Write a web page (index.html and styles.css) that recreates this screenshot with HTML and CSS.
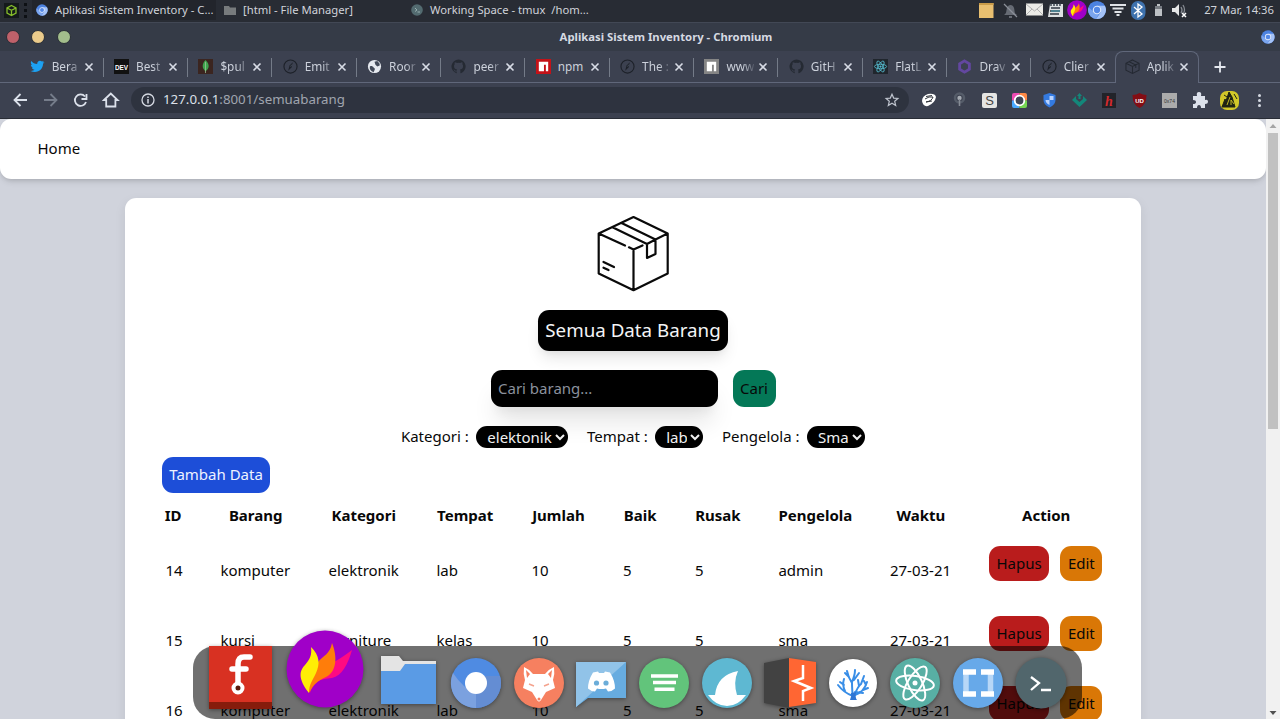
FILE: index.html
```html
<!DOCTYPE html>
<html lang="id">
<head>
<meta charset="utf-8">
<title>Aplikasi Sistem Inventory</title>
<link rel="stylesheet" href="styles.css">
</head>
<body>
<svg class="defs" aria-hidden="true">
  <defs>
    <symbol id="chromium" viewBox="0 0 20 20"><circle cx="10" cy="10" r="9.5" fill="#4c82e0"/><path d="M1 7a9.5 9.5 0 0 0 8 12.400L13 12 5.500 11z" fill="#7ba5ee"/><path d="M10 5.500h8.300A9.500 9.500 0 0 1 9 19.400l5-7z" fill="#a4c2f7"/><circle cx="10" cy="10" r="4.500" fill="#dfe9fb"/><circle cx="10" cy="10" r="3.300" fill="#5488e6"/></symbol>
    <symbol id="close" viewBox="0 0 10 10"><path d="M1.500 1.500l7 7M8.500 1.500l-7 7" stroke="#d8dce6" stroke-width="1.600" fill="none"/></symbol>
    <symbol id="compass" viewBox="0 0 16 16"><circle cx="8" cy="8" r="7" fill="none" stroke="#1d2129" stroke-width="1.200"/><path d="M10.500 3.500L9 9l-3.500 3.500L7 7z" fill="#1d2129"/><path d="M8 8l1.500-2" stroke="#596171" stroke-width=".7"/></symbol>
    <symbol id="github" viewBox="0 0 16 16"><path fill="#252a33" d="M8 .5a7.500 7.500 0 0 0-2.400 14.600c.4.100.5-.2.500-.4v-1.400c-2.100.5-2.600-.9-2.600-.9-.3-.9-.8-1.100-.8-1.100-.7-.5 0-.5 0-.5.800.1 1.200.8 1.200.8.700 1.200 1.800.8 2.200.6.100-.5.300-.8.500-1-1.700-.2-3.400-.8-3.400-3.700 0-.8.300-1.500.8-2-.1-.2-.3-1 .1-2 0 0 .6-.2 2.100.8a7 7 0 0 1 3.800 0c1.400-1 2-.8 2-.8.400 1 .2 1.800.1 2 .5.500.8 1.200.8 2 0 2.900-1.700 3.500-3.400 3.700.3.200.5.700.5 1.400v2.100c0 .2.100.5.500.4A7.500 7.500 0 0 0 8 .5z"/></symbol>
    <symbol id="npm" viewBox="0 0 16 16"><path fill="currentColor" d="M0 0h16v16H0z"/><path fill="#fff" d="M3 3h10v10h-2.500V6H8.500v7H3z"/></symbol>
    <symbol id="flame" viewBox="0 0 78 78"><circle cx="39" cy="39" r="38.500" fill="#a000c8"/><path d="M24 63c3-11 9-14 22-15 10-2 16-14 20-28-11 9-20 12-30 20-9 7-13 12-12 23z" fill="#ff0a82"/><path d="M23 63c5-9 8-12 17-16 10-5 12-19 6-34-2 11-8 12-15 20-8 9-10 18-8 30z" fill="#ff7d0a"/><path d="M23 63C11 48 14 40 19 35c5-6 7-10 6-18 9 9 9 17 5 26-3 7-7 11-7 20z" fill="#ffed05"/></symbol>
    <symbol id="box" viewBox="0 0 75 79"><g fill="none" stroke="currentColor" stroke-width="2.200" stroke-linejoin="round" stroke-linecap="round"><path d="M29 30.500L2.700 18.500 37.500 2l34.200 16.500v40L37.500 75.200 2.700 58.500v-40M33 32.300l4.500 2.200 9-4M37.500 34.500V75M16.500 12.300L51 29l8.500-4.500L25.500 8M51 29v14l8.500-4V24.500l12-6M7.500 47l10.500 5M7.500 52.700l5 2.300"/></g></symbol>
  </defs>
</svg>

<header class="taskbar">
  <svg class="start" viewBox="0 0 15 15"><path fill="#14191b" d="M0 0h15v15H0z"/><path d="M7.500 2.500l4.500 2.300v5.400l-4.500 2.300L3 10.200V4.800zM3 5l4.500 2.300L12 5M7.500 7.300v5" fill="none" stroke="#86be2b" stroke-width="1.300"/></svg>
  <i class="grip"></i>
  <div class="task task-on"><svg><use href="#chromium"/></svg><span>Aplikasi Sistem Inventory - C...</span></div>
  <div class="task"><svg viewBox="0 0 12 12"><path d="M0 2h5l1 1.500h6V11H0z" fill="#777b7d"/></svg><span>[html - File Manager]</span></div>
  <div class="task"><svg viewBox="0 0 12 12"><circle cx="6" cy="6" r="5.800" fill="#536b70"/><path d="M4 4l2 2-2 1.500M6.500 8H9" stroke="#a8c0c0" fill="none" stroke-width=".8"/></svg><span>Working Space - tmux&nbsp; /hom...</span></div>
  <div class="tray">
    <svg viewBox="0 0 208 20">
      <path d="M0 3h14.500v15H0z" fill="#e8bf70"/><path d="M0 3h14.500v2H0z" fill="#c99b48"/>
      <path d="M25 15c3-2 2-4 3-7 1-4 6-4 7 0 1 4 0 5 3 7zM30 16h3v2h-3z" fill="#666b74"/><path d="M25 4l13 13" stroke="#8b9099" stroke-width="1.200"/>
      <path d="M47 3.500h17v12H47z" fill="#ecece8"/><path d="M47 4l8.500 7L64 4M47 15l6-6M64 15l-6-6" fill="none" stroke="#aaa" stroke-width=".9"/>
      <path d="M71 4h13v13H69z" fill="#dde1e2"/><path d="M72 3v3M75 3v3M78 3v3M81 3v3M72 8h9M71 11h10M71 14h9" stroke="#303943" stroke-width="1.400"/><path d="M72 11h9" stroke="#43a2b8"/>
      <use href="#flame" x="88" width="20" height="20"/><use href="#chromium" x="108.500" y=".5" width="19" height="19"/>
      <path d="M131 5h16M133.500 8.500h11M135.500 12h7M137.500 15h3" stroke="#e0e3e7" stroke-width="1.800"/>
      <rect x="152" y="1" width="14.500" height="19" rx="7" fill="#3e72ae"/><path d="M155 7l8 7-4 3V4l4 3-8 7" fill="none" stroke="#fff" stroke-width="1.300"/>
      <path d="M178 4h3v2h2v10h-7V6h2z" fill="#bdc1c5"/><path d="M176 6h7v3h-7z" fill="#777c83"/>
      <path d="M193 8h3l4-4v12l-4-4h-3z" fill="#e5e6e8"/><path d="M202 7q2 3 0 6M204 5q3 5 0 9" fill="none" stroke="#868b92" stroke-width="1.300"/><path d="M203 13l4 4M207 13l-4 4" stroke="#fff" stroke-width="1.500"/>
    </svg>
    <time>27 Mar, 14:36</time>
  </div>
</header>

<div class="titlebar"><div class="lights"><i class="red"></i><i class="yellow"></i><i class="green"></i></div><b>Aplikasi Sistem Inventory - Chromium</b><svg class="app"><use href="#chromium"/></svg></div>

<div class="tabs">
  <div class="tab"><svg viewBox="0 0 16 16"><path fill="#1da1f2" d="M15.500 3.500l-1.600 1.600C14 11 8 16 .5 12.700c2 .1 3.300-.3 4.300-1.200-1.500-.2-2.400-.8-2.800-2.100h1.300C1.700 8.800.9 7.500.9 6.200l1.300.3C.7 5.200.6 3.500 1.400 2.200 3 4.200 5 5.200 7.700 5.400c-.4-3.200 3.100-4.600 5-2.700l2-.7-1.200 1.700z"/></svg><span>Bera</span><svg class="x"><use href="#close"/></svg></div>
  <div class="tab"><svg viewBox="0 0 16 16"><path fill="#111" d="M0 0h16v16H0z"/><text x="8" y="11.500" class="dev" textLength="14" lengthAdjust="spacingAndGlyphs">DEV</text></svg><span>Best</span><svg class="x"><use href="#close"/></svg></div>
  <div class="tab"><svg viewBox="0 0 16 16"><path fill="#3b2520" d="M0 0h16v16H0z"/><path fill="#3fa34d" d="M8 1c5 5 4 9 0 12-4-3-4-8 0-12z"/><path d="M8 3v12" stroke="#9dc59a" stroke-width=".8"/></svg><span>$pul</span><svg class="x"><use href="#close"/></svg></div>
  <div class="tab"><svg><use href="#compass"/></svg><span>Emit</span><svg class="x"><use href="#close"/></svg></div>
  <div class="tab"><svg viewBox="0 0 16 16"><circle cx="8" cy="8" r="7" fill="#e6e9ef"/><path d="M3 8c2-1 3 0 4 1s2 1 1 3l-1 2C4 13 2.500 11 3 8zM8 3l3-1 2.500 3v2l-2.500 1-2-2z" fill="#424958"/></svg><span>Roor</span><svg class="x"><use href="#close"/></svg></div>
  <div class="tab"><svg><use href="#github"/></svg><span>peer</span><svg class="x"><use href="#close"/></svg></div>
  <div class="tab"><svg color="#c41218"><use href="#npm"/></svg><span class="full">npm</span><svg class="x"><use href="#close"/></svg></div>
  <div class="tab"><svg><use href="#compass"/></svg><span>The :</span><svg class="x"><use href="#close"/></svg></div>
  <div class="tab"><svg color="#858585"><use href="#npm"/></svg><span>www</span><svg class="x"><use href="#close"/></svg></div>
  <div class="tab"><svg><use href="#github"/></svg><span>GitH</span><svg class="x"><use href="#close"/></svg></div>
  <div class="tab"><svg viewBox="0 0 16 16"><path fill="#20262d" d="M0 0h16v16H0z"/><g fill="none" stroke="#55bcd0" stroke-width=".9"><ellipse cx="8" cy="8" rx="6.500" ry="2.400"/><ellipse cx="8" cy="8" rx="6.500" ry="2.400" transform="rotate(60 8 8)"/><ellipse cx="8" cy="8" rx="6.500" ry="2.400" transform="rotate(120 8 8)"/></g><circle cx="8" cy="8" r="1.200" fill="#55bcd0"/></svg><span>FlatL</span><svg class="x"><use href="#close"/></svg></div>
  <div class="tab"><svg viewBox="0 0 16 16"><path d="M8 2l5.200 3v6L8 14l-5.200-3V5z" fill="none" stroke="#6347a0" stroke-width="3"/></svg><span>Drav</span><svg class="x"><use href="#close"/></svg></div>
  <div class="tab"><svg><use href="#compass"/></svg><span>Clier</span><svg class="x"><use href="#close"/></svg></div>
  <div class="tab tab-on"><svg viewBox="0 0 16 16"><path d="M8 1l7 3.500v7.500l-7 3.500L1 12V4.500zM1 4.500L8 8l7-3.500M8 8v7.500M4.500 3l7 3.500v3" fill="none" stroke="#242932" stroke-width="1.100"/></svg><span>Aplik</span><svg class="x"><use href="#close"/></svg></div>
  <svg class="plus" viewBox="0 0 12 12"><path d="M6 .5v11M.5 6h11" stroke="#e5e8ef" stroke-width="1.800"/></svg>
</div>

<div class="toolbar">
  <svg class="nav-icons" viewBox="0 0 120 35"><g fill="none" stroke="#dce1eb" stroke-width="1.800"><path d="M27 17H15M20.500 11L14.500 17l6 6"/><path d="M44 17h12M50.500 11l6 6-6 6" stroke="#767d8b"/><path d="M85 13.500A5.700 5.700 0 1 0 86 19M86.500 11v5h-5"/><path d="M104 17l6.800-6.500 6.800 6.500h-2.200v6.500h-9.200V17z"/></g></svg>
  <div class="url"><svg viewBox="0 0 14 14"><circle cx="7" cy="7" r="6" fill="none" stroke="#d5d9e2" stroke-width="1.300"/><path d="M7 6v4.500M7 3.500V5" stroke="#d5d9e2" stroke-width="1.500"/></svg><span><em>127.0.0.1</em>:8001/semuabarang</span><svg class="star" viewBox="0 0 14 14"><path d="M7 1.200l1.700 3.900 4.200.4-3.200 2.800 1 4.200L7 10.300l-3.700 2.200 1-4.200L1.100 5.500l4.200-.4z" fill="none" stroke="#bfc4ce" stroke-width="1.200"/></svg></div>
  <svg class="extensions" viewBox="920 83 360 35">
    <path d="M922 101q0-5 6-7 7-1 8 3-1 6-8 9-5 1-6-5z" fill="#fff"/><path d="M925 99q4-3 8-2-1 4-7 5l6-1M926 96.500l6-1" fill="none" stroke="#30343b" stroke-width="1"/>
    <circle cx="959.500" cy="98" r="4.500" fill="none" stroke="#555c69" stroke-width="2.500"/><circle cx="959.500" cy="98" r="2.200" fill="#a6abb3"/><path d="M959.500 99v7" stroke="#858b95" stroke-width="1.600"/>
    <rect x="982" y="93" width="15" height="15" rx="2" fill="#e5e5e3"/><text x="989.500" y="105" class="ext-s">S</text>
    <path d="M1014 93h5.500v7.500h-7.500V95q0-2 2-2z" fill="#ed4bb2"/><path d="M1019.500 93h5.500q2 0 2 2v5.500h-7.500z" fill="#ff8945"/><path d="M1012 100.500h7.500v7.500h-5.500q-2 0-2-2z" fill="#49a9ff"/><path d="M1019.500 100.500h7.500v5.500q0 2-2 2h-5.500z" fill="#75d653"/><circle cx="1019.500" cy="100.500" r="4.800" fill="#404654" stroke="#fff" stroke-width="1.800"/>
    <path d="M1043.500 95l6-2 6 2v5q0 5-6 7.500-6-2.500-6-7.500z" fill="#347ae0"/><path d="M1049.500 96h4v4h-4zM1045.500 100h4v5q-4-2-4-5z" fill="#b9d3ff"/>
    <path d="M1072 100l4-4v3l3.500 3 3.500-3v-3l4 4-7.500 7zM1077 96l2.500-3 2.500 3h-1.500v3h-2v-3z" fill="#13877a"/>
    <path d="M1102 93h14v15h-14z" fill="#222329"/><text x="1109" y="105.500" class="ext-h">h</text>
    <path d="M1132.500 95q4 0 7-2 3 2 7 2 0 10-7 13-7-3-7-13z" fill="#840d14"/><text x="1139.500" y="103" class="ext-u">UD</text>
    <path d="M1162 93h15v15h-15z" fill="#ababab"/><text x="1169.500" y="102.500" class="ext-o">0x74</text>
    <path d="M1193 96h4q-1-4 2-4t2 4h4v4q3-1 3 1.500t-3 2.500v4h-4q0-3-2-3t-2 3h-4v-4q3 0 3-2t-3-2z" fill="#dce1eb"/>
    <rect x="1220" y="91" width="19" height="19" rx="7" fill="#d3c829"/><path d="M1222 107l3-8 1 2 3-9 3 5 3 10zM1224 95l3 2M1234 94l3 5" fill="#202413" stroke="#202413"/><path d="M1227 105l3-8M1231 105v-5l3 4" fill="none" stroke="#d3c829" stroke-width=".9"/>
    <g fill="#d5d9e2"><circle cx="1259.500" cy="95.500" r="1.500"/><circle cx="1259.500" cy="100.500" r="1.500"/><circle cx="1259.500" cy="105.500" r="1.500"/></g>
  </svg>
</div>

<div class="viewport">
  <div class="page">
    <nav class="site-nav"><a>Home</a></nav>
    <main class="card">
      <svg class="logo"><use href="#box"/></svg>
      <h1>Semua Data Barang</h1>
      <form class="search"><input placeholder="Cari barang..."><button type="button" class="btn search-btn">Cari</button></form>
      <div class="filters">
        <label>Kategori : <select class="s1"><option>elektonik</option></select></label>
        <label>Tempat : <select class="s2"><option>lab</option></select></label>
        <label>Pengelola : <select class="s3"><option>Sma</option></select></label>
      </div>
      <button class="btn add">Tambah Data</button>
      <section class="table">
        <div class="row head"><b>ID</b><b>Barang</b><b>Kategori</b><b>Tempat</b><b>Jumlah</b><b>Baik</b><b>Rusak</b><b>Pengelola</b><b>Waktu</b><b>Action</b></div>
        <div class="row"><span>14</span><span>komputer</span><span>elektronik</span><span>lab</span><span>10</span><span>5</span><span>5</span><span>admin</span><span>27-03-21</span><div class="actions"><button class="btn del">Hapus</button><button class="btn edit">Edit</button></div></div>
        <div class="row"><span>15</span><span>kursi</span><span>furniture</span><span>kelas</span><span>10</span><span>5</span><span>5</span><span>sma</span><span>27-03-21</span><div class="actions"><button class="btn del">Hapus</button><button class="btn edit">Edit</button></div></div>
        <div class="row"><span>16</span><span>komputer</span><span>elektronik</span><span>lab</span><span>10</span><span>5</span><span>5</span><span>sma</span><span>27-03-21</span><div class="actions"><button class="btn del">Hapus</button><button class="btn edit">Edit</button></div></div>
      </section>
    </main>
  </div>
  <div class="scrollbar"><svg viewBox="0 0 14 12"><path d="M3.500 9L7 5l3.500 4z" fill="#a5a5a5"/></svg><i></i><svg viewBox="0 0 14 12"><path d="M3.500 4L7 8l3.500-4z" fill="#505050"/></svg></div>
</div>

<aside class="dock">
  <svg class="fr" viewBox="0 0 63 63"><path fill="#d83122" d="M0 0h63v63H0z"/><path fill="#861c0c" d="M0 56h63v7H0z"/><path d="M41 11h-6q-6 0-6 7v18M23 23h14" fill="none" stroke="#fff" stroke-width="5.500" stroke-linecap="round"/><circle cx="29" cy="42" r="4.500" fill="#5b1a0d" stroke="#fff" stroke-width="4"/></svg>
  <svg class="fl"><use href="#flame"/></svg>
  <svg class="fo" viewBox="0 0 56 48"><path d="M0 0h18l4 5h33v20H0z" fill="#e4e4e4"/><path d="M0 15h19l5-7h31v40H0z" fill="#5a9be5"/></svg>
  <svg viewBox="0 0 50 50"><circle cx="25" cy="25" r="25" fill="#4f8be2"/><path d="M2 15Q12 30 25 36v14A25 25 0 0 1 2 15z" fill="#7ba1df"/><path d="M25 18h24A25 25 0 0 1 25 50z" fill="#648dd3"/><circle cx="25" cy="25" r="11" fill="#fff"/></svg>
  <svg viewBox="0 0 50 50"><circle cx="25" cy="25" r="25" fill="#f68060"/><path d="M10 9q5 2 9 7h12q4-5 9-7 1 7-1 13l2 8-9 4-5 8q-2 3-4 0l-5-8-9-4 2-8q-2-6-1-13z" fill="#fff"/><path d="M12 12l4 4-3 4zM38 12l-4 4 3 4z" fill="#f68060"/><path d="M15 26l5 2M35 26l-5 2" stroke="#f4a28d" stroke-width="1.500"/><circle cx="25" cy="41" r="1.500" fill="#f68060"/></svg>
  <svg viewBox="0 0 50 50"><path d="M0 4h50v36H12L0 49z" fill="#67ace0"/><path d="M0 4h50L0 49z" fill="#91c3e8"/><path d="M17 14.500l5-1 1 1.500h5l1-1.500 5 1q5 8 5 16-3 3-7 3l-2-3q-5 1-9 0l-2 3q-4 0-7-3 0-8 5-16z" fill="#fff"/><circle cx="20.500" cy="25" r="2.600" fill="#6badd9"/><circle cx="30" cy="25" r="2.600" fill="#6badd9"/></svg>
  <svg viewBox="0 0 50 50"><circle cx="25" cy="25" r="25" fill="#62c47b"/><path d="M12 18h27M14 24.500h23M15.500 31.300h20" stroke="#fff" stroke-width="3.500"/></svg>
  <svg viewBox="0 0 50 50"><circle cx="25" cy="25" r="25" fill="#5eb8d2"/><path d="M6 37h7q2-20 23-24-5 11-1 24h9q-8 11-19 11T6 37z" fill="#fff"/></svg>
  <svg viewBox="0 0 50 50"><path d="M-1 5L24 0v50L-1 45z" fill="#424242"/><path d="M24 0l27 4v41l-27 4z" fill="#ff6633"/><path d="M38 7v13l-9 3 17 7-8 3v10" fill="none" stroke="#fff" stroke-width="2.500"/></svg>
  <svg viewBox="0 0 50 50"><circle cx="25" cy="25" r="24" fill="#fff"/><g fill="none" stroke="#398ee7" stroke-width="2" stroke-linecap="round"><path d="M25 41q-1-10-1-16-4-6-5-12M24 24q3-7 3-12M26 22l5-7M21 19l-4-4"/><path d="M25 38q-9-3-15-11M17 33q-3-6-1-12M16 27l-4-3"/><path d="M26 38q4-10 7-12l3-8M31 28l-1-6M27 37q9-3 12-13M35 32l5-2M38 27l-2-4M27 34l8 1"/></g><path d="M22 42q2-4 1-7l5-1q-1 6 1 8z" fill="#2f76d4"/></svg>
  <svg viewBox="0 0 50 50"><circle cx="25" cy="25" r="25" fill="#58afa4"/><g fill="none" stroke="#fff" stroke-width="2"><ellipse cx="25" cy="25" rx="19" ry="7" transform="rotate(8 25 25)"/><ellipse cx="25" cy="25" rx="19" ry="7" transform="rotate(65 25 25)"/><ellipse cx="25" cy="25" rx="19" ry="7" transform="rotate(122 25 25)"/></g><circle cx="25" cy="25" r="2.500" fill="#fff"/></svg>
  <svg viewBox="0 0 50 50"><circle cx="25" cy="25" r="25" fill="#67a9e9"/><path d="M13 15v20M37.500 15v20" stroke="#b7d7f7" stroke-width="5.500"/><path d="M10 14h13M28 14h13M10 36h13M28 36h13" stroke="#fff" stroke-width="5.500"/></svg>
  <svg viewBox="0 0 50 50"><circle cx="25" cy="25" r="25.500" fill="#51666c"/><path d="M15 19l8 6-8 7M25 32h10" fill="none" stroke="#fff" stroke-width="2.300"/></svg>
</aside>
</body>
</html>
```
FILE: styles.css
```css
* { box-sizing: border-box; }
html { font: 15px/1.5 "Noto Sans", sans-serif; }
body { margin: 0; width: 1280px; height: 719px; overflow: hidden; display: flex; flex-direction: column; position: relative; background: #3c4150; color: #080808; }
svg { display: block; flex: none; overflow: visible; }
.defs { position: absolute; width: 0; height: 0; }
button, input, select { font: inherit; margin: 0; }

.taskbar { height: 22px; flex: none; display: flex; align-items: center; background: #282c34; color: #d0d3da; font-size: 11.250px; line-height: 20px; padding-bottom: 2px; }
.start { width: 15px; height: 15px; margin-left: 4px; }
.grip { width: 3px; height: 15px; margin: 0 5px 0 5px; border-left: 3px dotted #0d1014; }
.task { display: flex; align-items: center; width: 187px; height: 20px; padding-left: 4px; white-space: nowrap; }
.task-on { background: #22252c; width: 184px; margin-right: 4px; }
.task svg { width: 12px; height: 12px; margin-right: 7px; }
.tray { display: flex; align-items: center; margin-left: auto; padding-right: 6px; }
.tray svg { width: 208px; height: 20px; margin-right: 17px; }
.tray time { white-space: nowrap; }

.titlebar { height: 29px; flex: none; display: grid; grid-template-columns: 1fr auto 1fr; align-items: center; background: #353b47; border-top: 1px solid #424855; color: #d6dae2; font-size: 11.300px; padding: 0 5px 0 6px; }
.lights { display: flex; gap: 11.400px; }
.lights i { width: 14px; height: 14px; border-radius: 50%; border: 1px solid #282d35; }
.red { background: #bf616a; } .yellow { background: #ebcb8b; } .green { background: #a3be8c; }
.titlebar b { padding-left: 51px; }
.app { width: 14px; height: 14px; justify-self: end; }

.tabs { height: 32px; flex: none; display: flex; padding-left: 19.200px; border-bottom: 1px solid #60677a; }
.tab { width: 84.350px; flex: none; height: 31px; display: flex; align-items: center; padding-left: 10.500px; color: #ccd1db; font-size: 11.800px; background: linear-gradient(#747b88, #747b88) right 7px / 1px 19px no-repeat; }
.tab > svg { width: 15px; height: 15px; }
.tab span { width: 28px; margin: 0 4px 0 7px; padding-top: 1px; white-space: nowrap; -webkit-mask-image: linear-gradient(90deg, #000 60%, rgba(0,0,0,.15)); mask-image: linear-gradient(90deg, #000 60%, rgba(0,0,0,.15)); }
.tab .full { -webkit-mask-image: none; mask-image: none; }
.tab > .x { width: 10px; height: 10px; }
.tab:nth-child(13) { background: none; }
.tab-on { height: 32px; background: #3c4150; border: 1px solid #60677a; border-bottom: 0; border-radius: 8px 8px 0 0; padding-left: 9px; padding-bottom: 2px; margin-left: -1px; }
.plus { width: 12px; height: 12px; margin: 10px 0 0 15px; }
.dev { font: bold 8px "Liberation Sans", sans-serif; fill: #fff; text-anchor: middle; }

.toolbar { height: 36px; flex: none; display: flex; border-bottom: 1px solid #292d36; }
.nav-icons { width: 120px; height: 35px; margin-right: 11px; }
.url { width: 778px; height: 26px; margin: 4px 11px 0 0; border-radius: 13px; background: #2e333f; display: flex; align-items: center; padding: 0 10px; font-size: 13.300px; color: #a0a5af; }
.url svg { width: 14px; height: 14px; }
.url span { margin-left: 8px; }
.url em { font-style: normal; color: #dce0e8; }
.url .star { margin-left: auto; }
.extensions { width: 360px; height: 35px; }
.extensions text { text-anchor: middle; font-family: "Liberation Sans", sans-serif; }
.ext-s { font-size: 13px; fill: #444; }
.extensions .ext-h { font: italic bold 14px "Liberation Serif", serif; fill: #d5292c; }
.ext-u { font-size: 6px; font-weight: bold; fill: #fff; }
.ext-o { font-size: 5px; fill: #333; }

.viewport { flex: 1; min-height: 0; display: flex; }
.page { width: 1266px; height: 600px; overflow: hidden; background: #d0d3dc; display: flex; flex-direction: column; align-items: center; }
.site-nav { width: 100%; height: 60px; flex: none; display: flex; align-items: center; padding: 0 0 2px 37.500px; background: #fff; border-radius: 11.250px; box-shadow: 0 4px 6px -1px rgba(0,0,0,.1), 0 2px 4px -1px rgba(0,0,0,.1); }
.card { width: 1016.500px; height: 900px; flex: none; margin-top: 18.500px; padding: 17px 37px; display: flex; flex-direction: column; align-items: center; background: #fff; border-radius: 11.250px; box-shadow: 0 4px 12px rgba(0,0,0,.08); }
.logo { width: 75px; height: 79px; color: #0a0a0a; }
h1 { width: 190px; height: 41px; margin: 16.500px 0 19px; font-weight: 400; font-size: 18.750px; line-height: 40px; text-align: center; white-space: nowrap; color: #f3f4f6; background: #000; border-radius: 11.250px; box-shadow: 0 10px 15px -3px rgba(0,0,0,.1), 0 4px 6px -2px rgba(0,0,0,.05); }
.search { display: flex; gap: 15px; }
.search input { width: 227px; height: 37px; padding: 0 7.500px 2px; border: 0; border-radius: 11.250px; background: #000; color: #fff; box-shadow: 0 20px 25px -5px rgba(0,0,0,.1), 0 10px 10px -5px rgba(0,0,0,.05); }
.search input::placeholder { color: #8b919d; }
.btn { height: 35.500px; border: 0; padding: 0 7.500px; border-radius: 11.250px; color: #080808; line-height: 22.500px; white-space: nowrap; }
.search-btn { width: 43px; height: 37px; background: #047857; }
.filters { display: flex; align-items: center; gap: 18.700px; height: 22px; margin-top: 19px; white-space: nowrap; }
.filters label { display: flex; align-items: flex-start; gap: 7.500px; line-height: 21px; }
select { height: 22px; padding: 0 0 1px 7px; border: 0; border-radius: 11.250px; background: #000; color: #f1f1f1; }
.s1 { width: 92px; } .s2 { width: 48px; } .s3 { width: 58px; }
.add { align-self: flex-start; margin-top: 9px; padding-bottom: 1px; background: #1d4ed8; color: #eef2ff; }
.table { align-self: flex-start; margin: 11.500px 0 0 3.700px; }
.row { display: grid; grid-template-columns: 17.500px 70.500px 70.500px 57.500px 54px 34.500px 46px 74px 62px 113.500px; column-gap: 37.500px; height: 70px; align-items: center; white-space: nowrap; }
.row span { padding-bottom: 1.500px; }
.head { height: 32px; align-items: start; justify-items: center; }
.head b:first-child { transform: translateX(-1px); }
.actions { display: flex; gap: 11.250px; margin-left: -.5px; padding-bottom: 15px; }
.del { background: #b91c1c; } .edit { background: #d97706; }

.scrollbar { width: 14px; background: #f1f1f1; display: flex; flex-direction: column; }
.scrollbar svg { width: 14px; height: 12px; }
.scrollbar i { width: 10px; height: 296px; margin: 2px 0 auto 2px; background: #c1c1c1; }

.dock { position: absolute; left: 193px; top: 646px; width: 889px; height: 73px; display: flex; align-items: center; gap: 12.800px; padding: 0 15.500px; background: rgba(0,0,0,.56); border-radius: 22px; }
.dock svg { width: 50px; height: 50px; filter: drop-shadow(0 1px 2px rgba(0,0,0,.4)); }
.dock .fr { width: 63px; height: 63px; margin-bottom: 11px; }
.dock .fl { width: 78px; height: 78px; margin: 0 3.500px 27px 2px; }
.dock .fo { width: 56px; height: 48px; margin: 0 1.500px 6px 0; }
```
